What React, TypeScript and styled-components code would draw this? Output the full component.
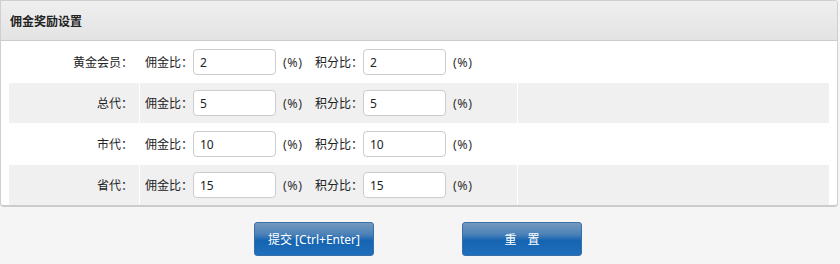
import * as React from "react";
import styled, { createGlobalStyle } from "styled-components";

const GlobalStyle = createGlobalStyle`
  html, body {
    margin: 0;
    padding: 0;
    background: #ffffff;
  }
  body {
    font-family: "Noto Sans", "Noto Sans CJK SC", sans-serif;
    font-size: 12px;
    color: #222;
  }
`;

type Level = {
  name: string;
  commission: string;
  points: string;
};

const levels: Level[] = [
  { name: "黄金会员", commission: "2", points: "2" },
  { name: "总代", commission: "5", points: "5" },
  { name: "市代", commission: "10", points: "10" },
  { name: "省代", commission: "15", points: "15" }
];

const Page = styled.div`
  width: 840px;
  height: 264px;
  display: flex;
  flex-direction: column;
  background: #f5f5f5;
`;

const Panel = styled.div`
  width: 838px;
  box-sizing: border-box;
  background: #ffffff;
  border: 1px solid #cfcfcf;
  border-bottom: 2px solid #cccccc;
  border-radius: 0 4px 4px 4px;
  overflow: hidden;
`;

const PanelHeader = styled.div`
  height: 39px;
  display: flex;
  align-items: center;
  padding-left: 9px;
  background: linear-gradient(to bottom, #efefef, #e3e3e3);
  border-bottom: 1px solid #cccccc;
  font-weight: bold;
  color: #222;
`;

const Body = styled.div`
  display: flex;
  flex-direction: column;
  gap: 1px;
  padding: 1px 8px 0 8px;
`;

const Row = styled.div<{ $striped: boolean }>`
  display: grid;
  grid-template-columns: 130px 377px 1fr;
  column-gap: 1px;
  height: 40px;
  & > div {
    background: ${(p) => (p.$striped ? "#f0f0f0" : "#ffffff")};
  }
`;

const LabelCell = styled.div`
  display: flex;
  align-items: center;
  justify-content: flex-end;
  padding-right: 6px;
`;

const FieldCell = styled.div`
  display: flex;
  align-items: center;
  padding-left: 5px;
`;

const Blank = styled.div``;

const Caption = styled.span`
  white-space: nowrap;
  width: 48px;
`;

const Input = styled.input`
  width: 83px;
  height: 26px;
  box-sizing: border-box;
  border: 1px solid #cccccc;
  border-radius: 4px;
  padding: 0 6px;
  font-family: "Noto Sans", "Noto Sans CJK SC", sans-serif;
  font-size: 12px;
  color: #222;
  background: #ffffff;
  outline: none;
`;

const Unit = styled.span<{ $gap: number }>`
  display: inline-block;
  width: 21px;
  margin-left: 7px;
  margin-right: ${(p) => p.$gap}px;
  font-size: 12.5px;
  letter-spacing: 0.5px;
  color: #333;
`;

const Footer = styled.div`
  display: flex;
  justify-content: center;
  gap: 88px;
  padding-top: 15px;
  padding-right: 4px;
`;

const Button = styled.button<{ $spaced?: boolean }>`
  width: 120px;
  height: 34px;
  border: 1px solid #3a6ea6;
  border-radius: 3px;
  background: linear-gradient(
    to bottom,
    #7399be 0%,
    #4d82b8 35%,
    #1464b1 55%,
    #1f6fbd 100%
  );
  color: #ffffff;
  font-family: "Noto Sans", "Noto Sans CJK SC", sans-serif;
  font-size: 12px;
  word-spacing: ${(p) => (p.$spaced ? "8px" : "0")};
  cursor: pointer;
  padding: 0;
`;

const App = () => (
  <Page>
    <GlobalStyle />
    <Panel>
      <PanelHeader>佣金奖励设置</PanelHeader>
      <Body>
        {levels.map((level, i) => (
          <Row key={level.name} $striped={i % 2 === 1}>
            <LabelCell>{level.name}：</LabelCell>
            <FieldCell>
              <Caption>佣金比：</Caption>
              <Input defaultValue={level.commission} />
              <Unit $gap={11}>(%)</Unit>
              <Caption>积分比：</Caption>
              <Input defaultValue={level.points} />
              <Unit $gap={0}>(%)</Unit>
            </FieldCell>
            <Blank />
          </Row>
        ))}
      </Body>
    </Panel>
    <Footer>
      <Button type="button">提交 [Ctrl+Enter]</Button>
      <Button type="button" $spaced>
        重 置
      </Button>
    </Footer>
  </Page>
);

export default App;
